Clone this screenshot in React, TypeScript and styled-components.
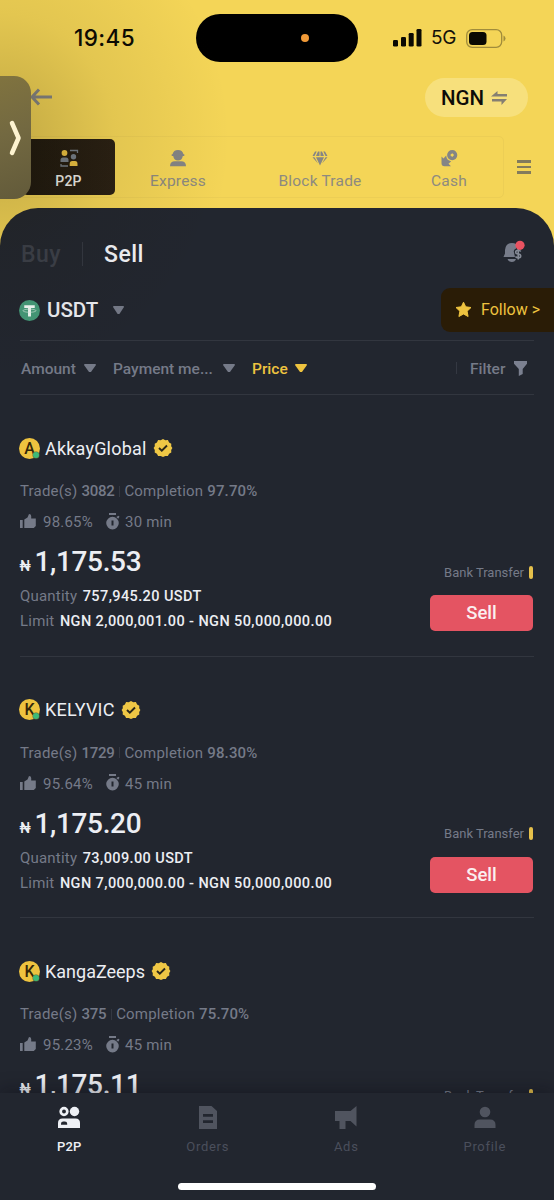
import React from 'react';
import styled, { createGlobalStyle, css } from 'styled-components';

const c = {
  yellow: '#f4d557',
  gold: '#eec33f',
  panel: '#22262f',
  line: '#32363f',
  text: '#eceef3',
  muted: '#757a88',
  dim: '#4b4f5c',
  icon: '#8d8a80',
  red: '#e45462',
};

const Global = createGlobalStyle`
  * { box-sizing: border-box; }
  body { margin: 0; background: ${c.panel}; font-family: Roboto, "Noto Sans", sans-serif; }
`;

const Screen = styled.div`
  position: relative;
  width: 554px;
  height: 1200px;
  overflow: hidden;
  display: flex;
  flex-direction: column;
  background: ${c.yellow};
`;

const Glow = styled.div`
  position: absolute;
  left: 0;
  top: 0;
  width: 260px;
  height: 420px;
  background: radial-gradient(ellipse 230px 250px at 0 138px, rgba(30, 24, 0, 0.24), rgba(30, 24, 0, 0.08) 50%, rgba(30, 24, 0, 0) 100%);
  pointer-events: none;
`;

const StatusBar = styled.div`
  display: flex;
  align-items: center;
  height: 62px;
  padding: 14px 47px 0 74px;
`;

const Clock = styled.div`
  width: 122px;
  font: 500 22.5px/48px Inter, sans-serif;
  letter-spacing: 0.4px;
  color: #0b0a03;
`;

const Island = styled.div`
  display: flex;
  align-items: center;
  justify-content: flex-end;
  width: 162px;
  height: 48px;
  padding-right: 49px;
  border-radius: 24px;
  background: #000;
`;

const CameraDot = styled.i`
  width: 8px;
  height: 8px;
  border-radius: 50%;
  background: #f09a38;
`;

const StatusIcons = styled.div`
  display: flex;
  align-items: center;
  margin-left: 35px;
`;

const Network = styled.span`
  width: 44px;
  padding-left: 9px;
  white-space: nowrap;
  font: 400 19px/48px Inter, sans-serif;
  letter-spacing: -0.3px;
  color: #14110a;
`;

const TopBar = styled.div`
  display: flex;
  align-items: center;
  justify-content: space-between;
  height: 39px;
  margin-top: 16px;
  padding: 0 26px 0 30px;
`;

const CurrencyPill = styled.div`
  display: flex;
  align-items: center;
  gap: 7px;
  width: 103px;
  height: 39px;
  padding-left: 16px;
  border-radius: 20px;
  background: #f7e07c;
  font-size: 20.5px;
  font-weight: 500;
  color: #0d0c08;
`;

const ModeBar = styled.div`
  display: flex;
  align-items: center;
  height: 62px;
  margin: 19px 0 10px 19px;
`;

const Modes = styled.div`
  display: flex;
  align-items: center;
  width: 485px;
  height: 62px;
  padding: 0 2px;
  border: 1px solid #ecce55;
  border-radius: 5px;
`;

const Mode = styled.div<{ $w: number; $active?: boolean }>`
  display: flex;
  flex-direction: column;
  align-items: center;
  width: ${(p) => p.$w}px;
  height: 56px;
  padding-top: 10px;
  border-radius: 5px;
  font-size: 15.5px;
  line-height: 20px;
  letter-spacing: 0.2px;
  color: ${c.icon};
  ${(p) => p.$active && css`
    background: linear-gradient(90deg, #1d170f, #2a2014);
    color: #f1efeb;
    font-size: 14px;
    font-weight: 500;
  `}
  svg { margin-bottom: 4px; flex: none; }
`;

const MenuButton = styled.div`
  display: flex;
  flex-direction: column;
  gap: 3px;
  margin-left: 13px;
  i { width: 14px; height: 2.6px; background: #837b5c; }
`;

const SideHandle = styled.div`
  position: absolute;
  left: 0;
  top: 76px;
  display: flex;
  align-items: center;
  width: 31px;
  height: 123px;
  padding-left: 8px;
  border-radius: 0 17px 17px 0;
  background: linear-gradient(160deg, #80733f, #736941 45%, #625a3a);
`;

const Panel = styled.main`
  display: flex;
  flex-direction: column;
  flex: 1;
  min-height: 0;
  overflow: hidden;
  padding: 24px 20px 0 20px;
  border-radius: 38px 38px 0 0;
  background: ${c.panel};
`;

const SideTabs = styled.div`
  display: flex;
  align-items: center;
  flex: none;
  height: 44px;
  font-size: 23px;
  font-weight: 500;
  letter-spacing: 0.5px;
`;

const SideTab = styled.span<{ $active?: boolean }>`
  width: ${(p) => (p.$active ? 60 : 62)}px;
  padding-left: 1px;
  color: ${(p) => (p.$active ? '#f3f4f8' : '#3c404a')};
`;

const Divider = styled.i<{ $h: number; $left?: number; $right?: number }>`
  flex: none;
  width: 1px;
  height: ${(p) => p.$h}px;
  margin-left: ${(p) => p.$left ?? 0}px;
  margin-right: ${(p) => p.$right ?? 0}px;
  background: #343842;
`;

const BellButton = styled.div`
  height: 24px;
  margin: 0 9px 5px auto;
`;

const AssetRow = styled.div`
  display: flex;
  align-items: center;
  flex: none;
  height: 44px;
  margin: 12px -20px 8px -1px;
`;

const AssetName = styled.span`
  width: 66px;
  margin-left: 7px;
  font-size: 20.5px;
  font-weight: 500;
  color: ${c.text};
`;

const Follow = styled.div`
  display: flex;
  align-items: center;
  gap: 9px;
  width: 113px;
  height: 44px;
  margin-left: auto;
  padding: 0 0 2px 14px;
  border-radius: 9px 0 0 9px;
  background: #2a1c06;
  color: ${c.gold};
  font-size: 16px;
  white-space: nowrap;
`;

const Filters = styled.div`
  display: flex;
  align-items: center;
  flex: none;
  height: 55px;
  padding: 1px 7px 0 1px;
  border-top: 1px solid ${c.line};
  border-bottom: 1px solid ${c.line};
  font-size: 15.5px;
  font-weight: 500;
  color: ${c.muted};
`;

const FilterLabel = styled.span<{ $w: number; $on?: boolean }>`
  width: ${(p) => p.$w}px;
  padding-top: 1px;
  white-space: nowrap;
  color: ${(p) => (p.$on ? c.gold : 'inherit')};
`;

const Caret = styled.i<{ $on?: boolean; $gap?: number; $w?: number }>`
  width: ${(p) => p.$w ?? 12}px;
  height: 8px;
  margin-right: ${(p) => p.$gap ?? 0}px;
  background: ${(p) => (p.$on ? c.gold : c.muted)};
  clip-path: polygon(4% 0, 96% 0, 100% 12%, 58% 100%, 42% 100%, 0 12%);
`;

const FilterEnd = styled.div`
  display: flex;
  align-items: center;
  margin-left: auto;
`;

const Card = styled.article`
  display: flex;
  flex-direction: column;
  flex: none;
  height: 261.7px;
  padding-top: 41px;
  border-bottom: 1px solid ${c.line};
`;

const NameRow = styled.div`
  display: flex;
  align-items: center;
  height: 24px;
  margin-left: -1px;
`;

const Avatar = styled.div`
  position: relative;
  width: 21px;
  height: 21px;
  border-radius: 50%;
  background: ${c.gold};
  font-size: 16px;
  font-weight: 500;
  line-height: 22px;
  text-align: center;
  color: #33270a;
`;

const Online = styled.i`
  position: absolute;
  right: 1px;
  bottom: 1px;
  width: 6px;
  height: 6px;
  border-radius: 50%;
  background: #3dba78;
  box-shadow: 0 0 0 0.5px #5a6a3a;
`;

const Name = styled.span<{ $w: number; $ls: number }>`
  width: ${(p) => p.$w}px;
  margin: 0 6px 0 5px;
  font-size: 18px;
  letter-spacing: ${(p) => p.$ls}px;
  white-space: nowrap;
  color: ${c.text};
`;

const StatRow = styled.div<{ $top: number }>`
  display: flex;
  align-items: center;
  height: 20px;
  margin-top: ${(p) => p.$top}px;
  font-size: 15px;
  letter-spacing: 0.2px;
  white-space: nowrap;
  color: ${c.muted};
  svg { margin: 0 0 2px -0.5px; }
`;

const StatText = styled.span<{ $w?: number; $left?: number }>`
  width: ${(p) => (p.$w ? p.$w + 'px' : 'auto')};
  margin-left: ${(p) => p.$left ?? 0}px;
`;

const StatValue = styled.b<{ $ls: number }>`
  margin-left: 4px;
  font-weight: 500;
  letter-spacing: ${(p) => p.$ls}px;
`;

const Offer = styled.div`
  display: flex;
  align-items: flex-end;
  justify-content: space-between;
  margin-top: 14px;
`;

const Price = styled.div`
  display: flex;
  align-items: baseline;
  height: 32px;
  font-size: 28px;
  font-weight: 500;
  line-height: 32px;
  letter-spacing: -0.35px;
  color: ${c.text};
  small { width: 15px; margin-left: -0.5px; font-size: 14px; font-weight: 500; }
`;

const Detail = styled.div<{ $top: number }>`
  height: 20px;
  margin-top: ${(p) => p.$top}px;
  font-size: 15px;
  line-height: 20px;
  letter-spacing: 0.2px;
  white-space: nowrap;
  color: ${c.muted};
  b { margin-left: 5.5px; font-weight: 500; font-size: 14.5px; letter-spacing: 0.4px; color: ${c.text}; }
`;

const Action = styled.div`
  display: flex;
  flex-direction: column;
  align-items: flex-end;
  height: 69px;
  margin-right: 1px;
`;

const Method = styled.div`
  display: flex;
  align-items: center;
  gap: 5px;
  height: 20px;
  margin-bottom: 13px;
  font-size: 13px;
  letter-spacing: 0;
  color: ${c.muted};
  i { width: 4px; height: 13px; border-radius: 2px; background: #e5c04b; }
`;

const SellButton = styled.button`
  width: 103px;
  height: 36px;
  padding: 0;
  border: 0;
  border-radius: 5px;
  background: ${c.red};
  font: 500 18.5px/36px Roboto, sans-serif;
  color: #fbeff0;
`;

const BottomNav = styled.nav`
  position: relative;
  display: flex;
  flex-wrap: wrap;
  align-content: flex-start;
  justify-content: center;
  flex: none;
  height: 107px;
  background: ${c.panel};
  box-shadow: 0 -3px 16px rgba(8, 10, 16, 0.35);
`;

const NavItem = styled.div<{ $on?: boolean }>`
  display: flex;
  flex-direction: column;
  align-items: center;
  width: 138.5px;
  height: 90px;
  padding-top: 12px;
  font-size: 13px;
  line-height: 18px;
  letter-spacing: ${(p) => (p.$on ? 0.2 : 0.7)}px;
  color: ${(p) => (p.$on ? '#eef0f5' : c.dim)};
  font-weight: ${(p) => (p.$on ? 500 : 400)};
  svg { margin-bottom: 9px; }
`;

const HomeBar = styled.i`
  width: 198px;
  height: 7px;
  border-radius: 4px;
  background: #fff;
`;

const Signal = () => (
  <svg width="29" height="18" viewBox="0 0 29 18" fill="#0b0a03">
    <rect x="0" y="11" width="5" height="6.5" rx="1.3" />
    <rect x="8" y="8" width="5" height="9.5" rx="1.3" />
    <rect x="15.7" y="4" width="5" height="13.5" rx="1.3" />
    <rect x="23.5" y="0" width="5" height="17.5" rx="1.3" />
  </svg>
);

const Battery = () => (
  <svg width="41" height="19" viewBox="0 0 41 19">
    <rect x="0.7" y="0.7" width="35" height="17.6" rx="5.5" fill="none" stroke="#a08c3b" strokeWidth="1.3" />
    <rect x="3" y="3" width="17.5" height="13" rx="3.5" fill="#0b0a03" />
    <path d="M37.5 6.500q2 1 2 3t-2 3z" fill="#a08c3b" />
  </svg>
);

const BackArrow = () => (
  <svg width="22" height="20" viewBox="0 0 22 20" fill="none" stroke="#858585" strokeWidth="3">
    <path d="M22 9H3M9 1.500L2 9l7 7.500" />
  </svg>
);

const Swap = () => (
  <svg width="17" height="14" viewBox="0 0 17 14" fill="#857f72">
    <path d="M6.500 0v3H16v2.400H0zM1 8h15L10.500 14v-3.400H1z" />
  </svg>
);

const P2PIcon = () => (
  <svg width="20" height="18" viewBox="0 0 20 18">
    <circle cx="5.500" cy="4" r="2.900" fill="#f0c544" />
    <path d="M1.500 13v-2q0-2.500 2.500-2.500h3q2.500 0 2.500 2.500v2z" fill="#77808c" />
    <circle cx="14.500" cy="7.700" r="2.700" fill="#77808c" />
    <path d="M10.700 17v-2q0-3 2.500-3h2.800q2.500 0 2.500 3v2z" fill="#f0c544" />
    <path d="M11 1.500h7.500V4M2 15v2h7" fill="none" stroke="#77808c" strokeWidth="1.300" />
  </svg>
);

const ExpressIcon = () => (
  <svg width="18" height="18" viewBox="0 0 18 18" fill="#858585">
    <path d="M3.500 5.300Q4.500 1 9 1t5.500 4.300h.8V7h-1.500Q13 11.500 9 11.500T4.200 7H2.700V5.300z" />
    <path d="M1 17.300q0-5 5-5h6q5 0 5 5z" />
  </svg>
);

const DiamondIcon = () => (
  <svg width="18" height="18" viewBox="0 0 18 18" fill="#858585">
    <path d="M4 2.500h1.700L3.500 7H1.500zM7 2.500h1.500V7H5zM9.500 2.500H11L13 7H9.500zM12.300 2.500H14L16.500 7h-2zM1.500 8.300h2L7 14.500zM5 8.300h8L9 16.500zM14.500 8.300h2L11 14.500z" />
  </svg>
);

const CashIcon = () => (
  <svg width="18" height="18" viewBox="0 0 18 18" fill="#858585">
    <path fillRule="evenodd" d="M12.200 1a5 5 0 1 1 0 10.200 5 5 0 0 1 0-10.200zm0 3.200L10.200 6.100l2 2 1.900-2z" />
    <path d="M1.500 7.500l2 2L6.200 6.500q.3 5 5 5.700l-2.700 2.600L11 17.300H4.500q-3 0-3-3z" />
  </svg>
);

const HandleChevron = () => (
  <svg width="15" height="36" viewBox="0 0 15 36" fill="none" stroke="#fdf3d0" strokeWidth="4.500" strokeLinecap="round" strokeLinejoin="round">
    <path d="M4 3l6.500 15L4 33" />
  </svg>
);

const Bell = () => (
  <svg width="22" height="24" viewBox="0 0 22 24">
    <path d="M.5 17L2 13.500V10Q2.500 3 9 3q2.500 0 4 1v4.500q-3 1.500-2 4l1 4.500z" fill="#777c8a" />
    <path d="M4.500 19h8.500q-1 3-4.200 3t-4.300-3z" fill="#777c8a" />
    <path d="M17.700 11.500q-.8-1.200-2.500-1.200-2.500 0-2.500 1.900 0 1.500 2.500 1.800t2.500 1.900q0 1.900-2.500 1.900-1.800 0-2.700-1.300M15.200 8.500v11" fill="none" stroke="#858a96" strokeWidth="1.600" />
    <circle cx="17" cy="5.300" r="4.600" fill="#ea5261" />
  </svg>
);

const Tether = () => (
  <svg width="21" height="21" viewBox="0 0 20 20">
    <circle cx="10" cy="10" r="10" fill="#459a79" />
    <path d="M5 5h10v2.600h-3.600v8.200H8.600V7.600H5z" fill="#f2faf6" />
    <ellipse cx="10" cy="10.200" rx="6.200" ry="1.500" fill="none" stroke="#d2eade" strokeWidth="0.600" />
  </svg>
);

const Star = () => (
  <svg width="17" height="17" viewBox="0 0 17 17" fill={c.gold} stroke={c.gold} strokeLinejoin="round">
    <path d="M8.500 1.200l2.200 4.600 5.300.7-3.900 3.700 1 5.300-4.600-2.500-4.600 2.500 1-5.300L1 6.500l5.300-.7z" />
  </svg>
);

const Funnel = () => (
  <svg width="13" height="15" viewBox="0 0 13 15" fill="#7b8090">
    <path d="M0 0h13v2.800L8.700 8v5L4.800 15V8L0 2.800z" />
  </svg>
);

const Verified = () => (
  <svg width="20" height="20" viewBox="0 0 20 20">
    <path
      d="M10 1l2.300 1.200 2.600-.1 1.200 2.300 2.200 1.300-.1 2.600L19.400 10l-1.200 1.900.1 2.500-2.200 1.300-1.200 2.300-2.600-.1L10 19l-2.300-1.100-2.600.1-1.200-2.300-2.200-1.300.1-2.500L.6 10l1.200-1.700-.1-2.600 2.200-1.300 1.200-2.300 2.600.1z"
      fill="#efc745"
    />
    <path d="M6 10l2.800 2.700L14 7.500" fill="none" stroke="#2b2719" strokeWidth="1.900" />
  </svg>
);

const Thumb = () => (
  <svg width="17" height="16" viewBox="0 0 17 16" fill={c.muted}>
    <path d="M0 7h2.700v8H0zM4.300 6.500L7.500 4.500 9 1q2.200 0 2.200 2v2.500h4.600V13l-2 2H4.300z" />
  </svg>
);

const Timer = () => (
  <svg width="14" height="17" viewBox="0 0 14 17" fill={c.muted}>
    <path d="M3 0h7v2H3zM10.300 4L12.500 2.800l1 1-1.300 2z" />
    <path fillRule="evenodd" d="M6.500 3.800a6.300 6.300 0 1 1 0 12.600 6.300 6.300 0 0 1 0-12.600zM5.500 7.500v5h2v-5z" />
  </svg>
);

const NavP2P = () => (
  <svg width="22" height="24" viewBox="0 0 22 24" fill="#eef0f5">
    <circle cx="6" cy="6.500" r="3.300" fill="none" stroke="#eef0f5" strokeWidth="2.700" />
    <circle cx="16.500" cy="6.500" r="4.700" />
    <path fillRule="evenodd" d="M0 23v-5q0-4.500 4.500-4.500h13q4.500 0 4.500 4.500v5zM3 19.800h6.200v-1q0-2.300-2.300-2.300H5.300Q3 16.500 3 18.800z" />
  </svg>
);

const NavOrders = () => (
  <svg width="18" height="24" viewBox="0 0 18 24" fill="#50545f">
    <path fillRule="evenodd" d="M0 1h12.500L18 6v18H0zM4 9v2.700h10V9zm0 6.200v2.700h10v-2.700z" />
  </svg>
);

const NavAds = () => (
  <svg width="22" height="24" viewBox="0 0 22 24" fill="#50545f">
    <path d="M0 6h15.500L21.500 1v20.500L15.500 16H10.500v8H4.500v-8H0z" />
  </svg>
);

const NavProfile = () => (
  <svg width="22" height="24" viewBox="0 0 22 24" fill="#50545f">
    <circle cx="11" cy="7" r="5.300" />
    <path d="M.5 23v-3q0-5.500 5.500-5.500h10q5.500 0 5.500 5.500v3z" />
  </svg>
);

const offers = [
  { name: 'AkkayGlobal', w: 102, ls: 0.2, trades: '3082', rate: '97.70%', like: '98.65%', time: '30 min', price: '1,175.53', qty: '757,945.20', min: '2,000,001.00' },
  { name: 'KELYVIC', w: 70, ls: 0.2, trades: '1729', rate: '98.30%', like: '95.64%', time: '45 min', price: '1,175.20', qty: '73,009.00', min: '7,000,000.00' },
  { name: 'KangaZeeps', w: 100, ls: 0, trades: '375', rate: '75.70%', like: '95.23%', time: '45 min', price: '1,175.11' },
];

export default function App() {
  return (
    <Screen>
      <Global />
      <StatusBar>
        <Clock>19:45</Clock>
        <Island><CameraDot /></Island>
        <StatusIcons>
          <Signal />
          <Network>5G</Network>
          <Battery />
        </StatusIcons>
      </StatusBar>
      <TopBar>
        <BackArrow />
        <CurrencyPill>NGN <Swap /></CurrencyPill>
      </TopBar>
      <ModeBar>
        <Modes>
          <Mode $w={93} $active><P2PIcon />P2P</Mode>
          <Mode $w={126}><ExpressIcon />Express</Mode>
          <Mode $w={158}><DiamondIcon />Block Trade</Mode>
          <Mode $w={100}><CashIcon />Cash</Mode>
        </Modes>
        <MenuButton><i /><i /><i /></MenuButton>
      </ModeBar>
      <Panel>
        <SideTabs>
          <SideTab>Buy</SideTab>
          <Divider $h={24} $right={20} />
          <SideTab $active>Sell</SideTab>
          <BellButton><Bell /></BellButton>
        </SideTabs>
        <AssetRow>
          <Tether />
          <AssetName>USDT</AssetName>
          <Caret $w={11} />
          <Follow><Star />Follow &gt;</Follow>
        </AssetRow>
        <Filters>
          <FilterLabel $w={63}>Amount</FilterLabel>
          <Caret $gap={17} />
          <FilterLabel $w={110}>Payment me...</FilterLabel>
          <Caret $gap={17} />
          <FilterLabel $w={43} $on>Price</FilterLabel>
          <Caret $on />
          <FilterEnd>
            <Divider $h={12} $right={13} />
            <FilterLabel $w={44}>Filter</FilterLabel>
            <Funnel />
          </FilterEnd>
        </Filters>
        {offers.map((o) => (
          <Card key={o.name}>
            <NameRow>
              <Avatar>{o.name[0]}<Online /></Avatar>
              <Name $w={o.w} $ls={o.ls}>{o.name}</Name>
              <Verified />
            </NameRow>
            <StatRow $top={21}>
              <StatText>Trade(s)<StatValue $ls={-0.3}>{o.trades}</StatValue></StatText>
              <Divider $h={11} $left={5} />
              <StatText $left={4}>Completion<StatValue $ls={0.15}>{o.rate}</StatValue></StatText>
            </StatRow>
            <StatRow $top={11}>
              <Thumb />
              <StatText $w={63} $left={6.5}>{o.like}</StatText>
              <Timer />
              <StatText $left={5.5}>{o.time}</StatText>
            </StatRow>
            <Offer>
              <div>
                <Price><small>₦</small>{o.price}</Price>
                <Detail $top={8}>{o.qty && <>Quantity<b>{o.qty} USDT</b></>}</Detail>
                <Detail $top={5}>{o.min && <>Limit<b>NGN {o.min} - NGN 50,000,000.00</b></>}</Detail>
              </div>
              <Action>
                <Method>Bank Transfer<i /></Method>
                {o.min && <SellButton>Sell</SellButton>}
              </Action>
            </Offer>
          </Card>
        ))}
      </Panel>
      <BottomNav>
        <NavItem $on><NavP2P />P2P</NavItem>
        <NavItem><NavOrders />Orders</NavItem>
        <NavItem><NavAds />Ads</NavItem>
        <NavItem><NavProfile />Profile</NavItem>
        <HomeBar />
      </BottomNav>
      <Glow />
      <SideHandle><HandleChevron /></SideHandle>
    </Screen>
  );
}
